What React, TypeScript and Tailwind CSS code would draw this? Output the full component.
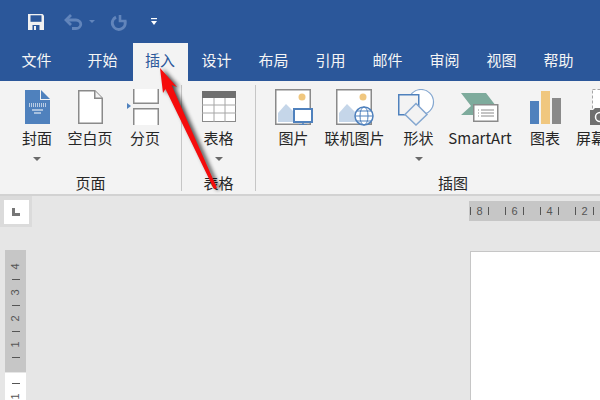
import React from "react";

const font = { fontFamily: '"Noto Sans CJK SC", "Noto Sans", sans-serif' };

function Caret() {
  return <div className="h-0 w-0 border-x-[4px] border-t-[4px] border-x-transparent border-t-[#6a6a6a]" />;
}

function RibbonButton({ w, label, caret, children }: { w: number; label: string; caret?: boolean; children: React.ReactNode }) {
  return (
    <div className="flex shrink-0 flex-col items-center" style={{ width: w }}>
      <div className="flex h-[37px] w-[60px] shrink-0 items-start justify-center">{children}</div>
      <div className="mt-[2px] h-[20px] whitespace-nowrap text-[15px] leading-[20px] text-[#262626]">{label}</div>
      {caret && <div className="mt-[9px]"><Caret /></div>}
    </div>
  );
}

function Sep() {
  return <div className="mt-[4px] h-[106px] w-px shrink-0 bg-[#c6c6c6]" />;
}

const tabs = ["设计", "布局", "引用", "邮件", "审阅", "视图", "帮助"];

function VTick() {
  return <div className="flex h-[13px] items-center justify-center"><div className="h-px w-[8px] bg-[#555]" /></div>;
}

function VNum({ n }: { n: string }) {
  return <div className="flex h-[13px] -rotate-90 items-center justify-center">{n}</div>;
}

function HGroup({ n }: { n: string }) {
  return (
    <div className="flex w-[35px] shrink-0 items-center">
      <div className="h-[8px] w-px bg-[#555]" />
      <div className="w-[17px] text-center">{n}</div>
      <div className="h-[8px] w-px bg-[#555]" />
    </div>
  );
}

export default function App() {
  return (
    <div className="relative h-[400px] w-[600px] overflow-hidden bg-[#e6e6e6]" style={font}>
      {/* title bar */}
      <div className="flex h-[43px] items-center bg-[#2b579a] pl-[28px]">
        <svg width="16" height="16" viewBox="0 0 16 16">
          <path d="M0 0h14.500L16 1.500V16H0z" fill="#f1f1f1" />
          <rect x="2.500" y="1.300" width="11" height="6.500" fill="#2b579a" />
          <rect x="4.500" y="11" width="7" height="5" fill="#2b579a" />
          <rect x="6" y="12" width="2" height="4" fill="#f1f1f1" />
        </svg>
        <svg className="ml-[20px]" width="19" height="16" viewBox="0 0 19 16" fill="none">
          <path d="M2 6h10c2.500 0 4.800 2 4.800 4.300S14.500 14.500 12 14.500H8" stroke="#6285bb" strokeWidth="2.800" />
          <path d="M7 1L2 6l5 5" stroke="#6285bb" strokeWidth="2.800" />
        </svg>
        <div className="ml-[6px] h-0 w-0 border-x-[3px] border-t-[3px] border-x-transparent border-t-[#6285bb]" />
        <svg className="ml-[15px] mt-[2px]" width="17" height="16" viewBox="0 0 17 16" fill="none">
          <path d="M6 2.200A6.400 6.400 0 1 0 15 6.500" stroke="#6285bb" strokeWidth="3" />
          <path d="M10 0v6h6.500" stroke="#6285bb" strokeWidth="2.600" />
        </svg>
        <svg className="ml-[24px]" width="6" height="7" viewBox="0 0 6 7">
          <rect x="0" y="0" width="6" height="1.200" fill="#fff" />
          <path d="M0 3h6L3 7z" fill="#fff" />
        </svg>
      </div>

      {/* tabs */}
      <div className="flex h-[38px] bg-[#2b579a] pl-[9px] text-[15px] text-[#f5f5f5]">
        <div className="flex w-[55px] items-center justify-center pb-[4px]">文件</div>
        <div className="ml-[11px] flex w-[55px] items-center justify-center pb-[4px]">开始</div>
        <div className="ml-[3px] mr-[-1px] flex w-[55px] items-center justify-center bg-[#f3f3f3] pb-[4px] pr-[1px] text-[#2b579a]">插入</div>
        {tabs.map((t) => (
          <div key={t} className="ml-[2px] flex w-[55px] shrink-0 items-center justify-center pb-[4px]">{t}</div>
        ))}
      </div>

      {/* ribbon */}
      <div className="flex h-[115px] overflow-hidden border-b-2 border-[#d2d2d2] bg-[#f3f3f3] text-[#262626]">
        <div className="flex w-[181px] shrink-0 flex-col">
          <div className="flex h-[86px] items-start pl-[10px] pt-[8px]">
            <RibbonButton w={54} label="封面" caret>
              <svg width="25" height="34" viewBox="0 0 25 34" className="mt-[1px]">
                <path d="M0 0h15v10h10v24H0z" fill="#4f81bd" />
                <path d="M16 0l9 9h-9z" fill="#4f81bd" />
                <path d="M4 14h17M4 16h17" stroke="#dbe5f1" strokeWidth="1.500" strokeDasharray="1 1" />
                <path d="M7 20h11M9 23h7" stroke="#fff" strokeWidth="1" />
              </svg>
            </RibbonButton>
            <RibbonButton w={52} label="空白页">
              <svg width="25" height="34" viewBox="0 0 25 34" className="mt-[1px]">
                <path d="M.75.75h16l7.500 7.500v25H.75z" fill="#fff" stroke="#8a8a8a" strokeWidth="1.500" />
                <path d="M16.750.75v7.500h7.500" fill="#f3f3f3" stroke="#8a8a8a" strokeWidth="1.500" />
              </svg>
            </RibbonButton>
            <RibbonButton w={58} label="分页">
              <svg width="32" height="36" viewBox="0 0 32 36" className="mr-[4px]">
                <path d="M0 14l4 3-4 3z" fill="#4f81bd" />
                <path d="M6.750 0v14.250h24.500V0" fill="#fff" stroke="#8a8a8a" strokeWidth="1.500" />
                <path d="M6.750 36V19.750h24.500V36" fill="#fff" stroke="#8a8a8a" strokeWidth="1.500" />
              </svg>
            </RibbonButton>
          </div>
          <div className="mt-[6px] text-center text-[15px] leading-[20px]">页面</div>
        </div>
        <Sep />
        <div className="flex w-[73px] shrink-0 flex-col items-center">
          <div className="h-[86px] pt-[8px]">
            <RibbonButton w={73} label="表格" caret>
              <svg width="34" height="32" viewBox="0 0 34 32" className="mt-[2px]">
                <rect x=".5" y=".5" width="33" height="30" fill="#fff" stroke="#8a8a8a" />
                <rect width="34" height="7" fill="#6f6f6f" />
                <path d="M12 7v24M23 7v24M0 14h34M0 22h34" stroke="#a6a6a6" />
              </svg>
            </RibbonButton>
          </div>
          <div className="mt-[6px] text-[15px] leading-[20px]">表格</div>
        </div>
        <Sep />
        <div className="flex min-w-0 flex-1 flex-col">
          <div className="flex h-[86px] items-start pl-[7px] pt-[8px]">
            <RibbonButton w={61} label="图片">
              <svg width="38" height="36" viewBox="0 0 38 36">
                <rect x=".75" y=".75" width="34.500" height="34.500" fill="#fff" stroke="#8a8a8a" strokeWidth="1.500" />
                <circle cx="27" cy="8" r="3.500" fill="#f0c77f" />
                <path d="M3 33V24l8-9 9 9 8 9z" fill="#c5d6e9" />
                <rect x="19" y="20" width="18" height="13" fill="#fff" stroke="#4f81bd" strokeWidth="2" />
                <path d="M28 33v3M24 36h8" stroke="#4f81bd" strokeWidth="1.500" />
              </svg>
            </RibbonButton>
            <RibbonButton w={61} label="联机图片">
              <svg width="38" height="37" viewBox="0 0 38 37">
                <rect x=".75" y=".75" width="34.500" height="34.500" fill="#fff" stroke="#8a8a8a" strokeWidth="1.500" />
                <circle cx="27" cy="8" r="3.500" fill="#f0c77f" />
                <path d="M3 33V24l8-9 9 9 8 9z" fill="#c5d6e9" />
                <circle cx="28" cy="27" r="9" fill="#fff" stroke="#4f81bd" strokeWidth="1.500" />
                <ellipse cx="28" cy="27" rx="4" ry="9" fill="none" stroke="#4f81bd" strokeWidth="1" />
                <path d="M19 27h18M21 22h14M21 32h14" stroke="#4f81bd" strokeWidth="1" />
              </svg>
            </RibbonButton>
            <RibbonButton w={67} label="形状" caret>
              <svg width="38" height="37" viewBox="0 0 38 37" fill="none" className="mr-[4px]">
                <circle cx="23" cy="13" r="12.500" fill="#fff" stroke="#84a7d0" strokeWidth="1.200" />
                <rect x=".75" y="5.750" width="20" height="20" fill="#f3f3f3" stroke="#4f81bd" strokeWidth="1.500" />
                <path d="M18 14.500l11 11-11 10.500L7 25.500z" fill="#f3f3f3" stroke="#84a7d0" strokeWidth="1.500" />
              </svg>
            </RibbonButton>
            <RibbonButton w={56} label="SmartArt">
              <svg width="38" height="29" viewBox="0 0 38 29" className="mt-[4px]">
                <path d="M0 0h25l10 13-10 0v9H13v0H0l10-9z" fill="#7eab9c" />
                <rect x="12.750" y="11.750" width="24" height="16.500" fill="#fff" stroke="#8a8a8a" strokeWidth="1.500" />
                <path d="M17 17h1M17 20h1M17 23h1M20 17h13M20 20h13M20 23h13" stroke="#8a8a8a" />
              </svg>
            </RibbonButton>
            <RibbonButton w={74} label="图表">
              <svg width="31" height="33" viewBox="0 0 31 33" className="mt-[2px]">
                <rect x="0" y="10" width="9" height="23" fill="#4f81bd" />
                <rect x="11" y="0" width="9" height="33" fill="#f0c77f" />
                <rect x="22" y="7" width="9" height="26" fill="#8a8a8a" />
              </svg>
            </RibbonButton>
            <RibbonButton w={18} label="屏幕">
              <svg width="30" height="37" viewBox="0 0 30 37" className="ml-[28px]">
                <rect x="2.500" y=".5" width="27" height="30" fill="#fff" stroke="#a6a6a6" strokeDasharray="3 2" />
                <path d="M0 21h3l2-2h8l2 2h15v15H0z" fill="#6f6f6f" />
                <circle cx="10" cy="28" r="4.500" fill="#6f6f6f" stroke="#fff" strokeWidth="1.500" />
              </svg>
            </RibbonButton>
          </div>
          <div className="mt-[6px] pl-[182px] text-[15px] leading-[20px]">插图</div>
        </div>
      </div>

      {/* workspace */}
      <div className="flex h-[205px]">
        <div className="flex w-[32px] shrink-0 flex-col">
          <div className="flex h-[31px] w-[32px] items-center justify-center bg-[#dbdbdb]">
            <div className="flex h-[24px] w-[25px] items-center justify-center bg-white">
              <svg width="8" height="8" viewBox="0 0 8 8"><path d="M0 0h3v5h5v3H0z" fill="#767676" /></svg>
            </div>
          </div>
          <div className="ml-[5px] mt-[23px] h-[122px] w-[21px] bg-[#c6c6c6] pt-[10px] text-[11px] leading-none text-[#555]" style={{ fontFamily: '"Liberation Sans", sans-serif' }}>
            <VNum n="4" />
            <VTick />
            <VNum n="3" />
            <VTick />
            <VNum n="2" />
            <VTick />
            <VNum n="1" />
            <VTick />
          </div>
          <div className="ml-[5px] mt-px h-[28px] w-[21px] bg-white pt-[4px] text-[11px] leading-none text-[#555]" style={{ fontFamily: '"Liberation Sans", sans-serif' }}>
            <VTick />
            <VNum n="1" />
          </div>
        </div>
        <div className="flex flex-1 flex-col items-end">
          <div className="mt-[5px] flex h-[20px] w-[131px] shrink-0 items-center overflow-hidden bg-[#c6c6c6] pl-[1px] text-[11px] text-[#555]" style={{ fontFamily: '"Liberation Sans", sans-serif' }}>
            <HGroup n="8" />
            <HGroup n="6" />
            <HGroup n="4" />
            <HGroup n="2" />
          </div>
          <div className="mt-[30px] h-[200px] w-[130px] shrink-0 border-l border-t border-[#c6c6c6] bg-white" />
        </div>
      </div>

      {/* annotation arrow */}
      <svg className="pointer-events-none absolute left-0 top-0" width="600" height="400" viewBox="0 0 600 400">
        <defs>
          <filter id="s" x="-50%" y="-20%" width="200%" height="140%">
            <feGaussianBlur stdDeviation="2.200" />
          </filter>
        </defs>
        <path d="M160 68L177 87 171.500 85 217 188 214 189 165.500 89 163 93z" fill="#000" opacity=".7" filter="url(#s)" transform="translate(3 1)" />
        <path d="M160 68L177 87 171.500 85 217 188 214 189 165.500 89 163 93z" fill="#f50c0c" />
      </svg>
    </div>
  );
}
